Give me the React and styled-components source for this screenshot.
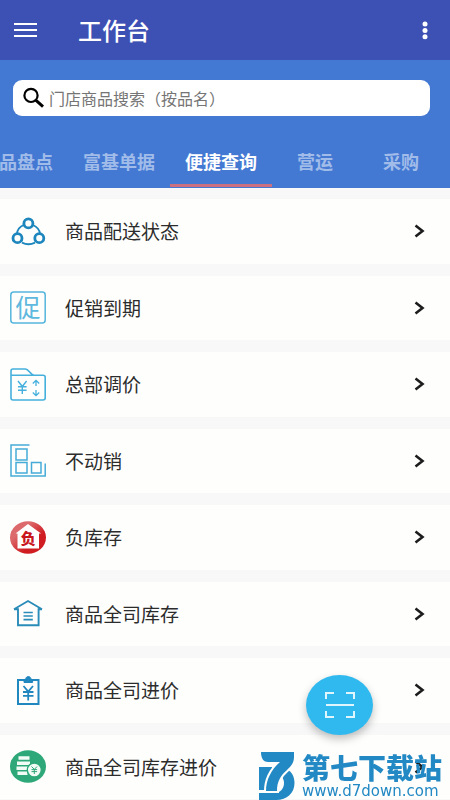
import React, { useLayoutEffect, useRef, useState } from 'react'
import styled, { createGlobalStyle } from 'styled-components'


const tabs = ['商品盘点', '富基单据', '便捷查询', '营运', '采购']

const menu = [
    { title: '商品配送状态', icon: <DeliveryIcon /> },
    { title: '促销到期', icon: <PromotionIcon /> },
    { title: '总部调价', icon: <FolderPriceIcon /> },
    { title: '不动销', icon: <UnsoldIcon /> },
    { title: '负库存', icon: <NegativeStockIcon /> },
    { title: '商品全司库存', icon: <WarehouseIcon /> },
    { title: '商品全司进价', icon: <ClipboardIcon /> },
    { title: '商品全司库存进价', icon: <CoinsIcon /> },
]

export default function App() {
    const [active, setActive] = useState('便捷查询')
    const tabBar = useRef(null)

    useLayoutEffect(() => {
        tabBar.current.scrollLeft = 34
    }, [])

    return (
        <>
            <GlobalStyle />
            <Page>
                <Header>
                    <IconButton aria-label="菜单">
                        <svg width="24" height="16" viewBox="0 0 24 16" stroke="currentColor" strokeWidth="2">
                            <path d="M0 2H23M0 8H23M0 14H23" />
                        </svg>
                    </IconButton>
                    <h1>工作台</h1>
                    <IconButton aria-label="更多">
                        <svg width="6" height="20" viewBox="0 0 6 20" fill="currentColor">
                            <circle cx="3" cy="4" r="2.5" />
                            <circle cx="3" cy="10.4" r="2.5" />
                            <circle cx="3" cy="16.8" r="2.5" />
                        </svg>
                    </IconButton>
                </Header>

                <TopPanel>
                    <SearchBox>
                        <svg width="23" height="22" viewBox="0 0 23 22" fill="none" stroke="#000">
                            <circle cx="9" cy="8.4" r="6.6" strokeWidth="2.2" />
                            <path d="M13.5 12.8L21 19.6" strokeWidth="3" />
                        </svg>
                        <input type="search" aria-label="门店商品搜索" placeholder="门店商品搜索（按品名）" />
                    </SearchBox>
                    <Tabs role="tablist" ref={tabBar}>
                        {
                            tabs.map(tab => (
                                <Tab
                                    key={tab}
                                    role="tab"
                                    aria-selected={tab === active}
                                    $active={tab === active}
                                    onClick={() => setActive(tab)}
                                >
                                    {tab}
                                </Tab>
                            ))
                        }
                    </Tabs>
                </TopPanel>

                <MenuList>
                    {
                        menu.map(item => (
                            <MenuItem key={item.title}>
                                <MenuLink href="#">
                                    {item.icon}
                                    <span>{item.title}</span>
                                    <Chevron />
                                </MenuLink>
                            </MenuItem>
                        ))
                    }
                </MenuList>
            </Page>

            <ScanButton aria-label="扫一扫">
                <svg width="30" height="28" viewBox="0 0 30 28" fill="none" stroke="#dff6ff" strokeWidth="2">
                    <path d="M1 8V2H9M21 2H29V8M29 20V26H21M9 26H1V20M1 14H29" />
                </svg>
            </ScanButton>

            <SiteMark href="#">
                <svg width="36" height="48" viewBox="0 0 36 48" fill="#2389c4">
                    <path d="M0 15H13V25L9 38H0Z" />
                    <path d="M29 18C33 20 35.5 25 35.5 31C35.5 41 28 48 17 48H0V41H15C21 41 25 37 25 31C25 28 24 26 22 24Z" />
                    <path d="M2 0H35V5C35 11 32 14 28 18C21 24 18 30 18 39H7C7 28 12 18 21 10H9C5 10 2 7 2 0Z" stroke="#fefefd" strokeWidth="4" paintOrder="stroke" />
                </svg>
                <SiteText>
                    <strong>第七下载站</strong>
                    <small>www.d7down.com</small>
                </SiteText>
            </SiteMark>
        </>
    )
}


function Chevron() {
    return (
        <svg width="12" height="14" viewBox="0 0 12 14" fill="none" stroke="#1c1c1c" strokeWidth="2.6">
            <path d="M1.5 1.5L8.5 7L1.5 12.5" />
        </svg>
    )
}

function DeliveryIcon() {
    return (
        <MenuIcon viewBox="0 0 36 33" stroke="#1c86bd">
            <path d="M13.5 10C9.5 11.8 7.4 14.8 7 18.5M23 10C27 11.8 29.4 14.8 30 18.5M12 27.6C16 29.6 21 29.6 25 27.6" strokeWidth="1.8" />
            <circle cx="18.4" cy="8.4" r="4.5" strokeWidth="2.8" />
            <circle cx="7.5" cy="23.2" r="4.5" strokeWidth="2.8" />
            <circle cx="29.3" cy="23.2" r="4.5" strokeWidth="2.8" />
        </MenuIcon>
    )
}

function PromotionIcon() {
    return (
        <MenuIcon viewBox="0 0 36 33" stroke="#55b5dd">
            <rect x="0.8" y="1" width="34.4" height="31" rx="3" strokeWidth="1.5" />
            <text x="18" y="26" textAnchor="middle" fontSize="25" fontWeight="400" fill="#5fb9de" stroke="none">促</text>
        </MenuIcon>
    )
}

function FolderPriceIcon() {
    return (
        <MenuIcon viewBox="0 0 36 33" stroke="#45b0dc">
            <path d="M1 7.5V3C1 1.5 1.8 1 3 1H15.5C19 1 20 7.2 24.5 7.2H33C34.5 7.2 35.2 8 35.2 9.2V30C35.2 31.4 34.4 32 33 32H3C1.6 32 1 31.4 1 30V7.2H25" strokeWidth="1.6" />
            <path d="M8 13L12.3 18.5L16.6 13M12.3 18.5V26M8 18.8H16.6M8 22.2H16.6" strokeWidth="1.4" />
            <path d="M26 18V12.5M22.8 15.5L26 12.3L29.2 15.5M26 22V27.5M22.8 24.5L26 27.7L29.2 24.5" strokeWidth="1.3" />
        </MenuIcon>
    )
}

function UnsoldIcon() {
    return (
        <MenuIcon viewBox="0 0 36 33" stroke="#45acd8" strokeWidth="1.5">
            <path d="M19.5 1H1V32H35.2V19.5" />
            <rect x="6" y="5" width="11" height="11" />
            <rect x="6" y="18.5" width="11" height="10.5" />
            <rect x="21.5" y="18.5" width="9.5" height="10.5" />
        </MenuIcon>
    )
}

function NegativeStockIcon() {
    return (
        <MenuIcon viewBox="0 0 36 33">
            <defs>
                <linearGradient id="stockRed" x1="0" y1="0" x2="1" y2="1">
                    <stop offset="0.3" stopColor="#dc6a6c" />
                    <stop offset="0.65" stopColor="#cf1d22" />
                </linearGradient>
            </defs>
            <ellipse cx="18" cy="16.5" rx="18" ry="16.2" fill="url(#stockRed)" />
            <path d="M7.5 27.5V12.5H5.5L18 3L31 12.5H29V27.5Z" fill="#fff" />
            <text x="18.2" y="23.2" textAnchor="middle" fontSize="15" fontWeight="900" fill="#c9171e">负</text>
        </MenuIcon>
    )
}

function WarehouseIcon() {
    return (
        <MenuIcon viewBox="0 0 36 33" stroke="#2a8cb8">
            <path d="M4 12.2L18 4L32 12.2M4 12.2H8V28.3H28.6V12.2H32" strokeWidth="1.9" />
            <path d="M13.5 15.5H22.8M13.5 19H22.8M13.5 22.6H22.8" strokeWidth="1.6" />
        </MenuIcon>
    )
}

function ClipboardIcon() {
    return (
        <MenuIcon viewBox="0 0 36 33" stroke="#2087bf">
            <rect x="8" y="6" width="20.5" height="24" strokeWidth="2" />
            <path d="M14 8.5V6C14 5 16 5.4 16 4.4C16 2 20.6 2 20.6 4.4C20.6 5.4 22.6 5 22.6 6V8.5Z" fill="#2087bf" strokeWidth="1" />
            <path d="M13.5 12L18.2 17.5L23 12M18.2 17.5V26.5M13 18H23.5M13 21.8H23.5" strokeWidth="1.8" />
        </MenuIcon>
    )
}

function CoinsIcon() {
    return (
        <MenuIcon viewBox="0 0 36 33">
            <ellipse cx="18" cy="16.5" rx="18" ry="16.2" fill="#2ea878" />
            <path d="M8.5 8H19.5M7 13.3H20M6.5 18.3H18.5M7.5 23.2H17.5" stroke="#f3fbf7" strokeWidth="3.6" />
            <circle cx="24.3" cy="20" r="7" fill="#f3fbf7" stroke="#2ea878" strokeWidth="1.4" />
            <path d="M21.5 16.5L24.3 19.4L27.1 16.5M24.3 19.4V24M21.5 19.6H27.1M21.5 21.6H27.1" stroke="#2ea878" strokeWidth="1" />
        </MenuIcon>
    )
}


const GlobalStyle = createGlobalStyle`

    * {
        box-sizing: border-box;
    }

    body {
        margin: 0;
        background-color: #f8f8f8;
    }

    body, button, input {
        font-family: "Noto Sans CJK SC", "Noto Sans", sans-serif;
    }

`

const Page = styled.main`
    min-height: 100vh;
    display: flex;
    flex-direction: column;
`

const Header = styled.header`
    height: 60px;
    display: flex;
    align-items: center;
    padding: 0 14px;
    background-color: #3d50b3;
    color: #fff;

    h1 {
        flex: 1;
        margin: 0 0 0 40px;
        font-size: 24px;
        line-height: 32px;
        font-weight: 500;
    }
`

const IconButton = styled.button`
    display: flex;
    padding: 0;
    border: 0;
    background: none;
    color: #fff;
    cursor: pointer;

    &:last-child {
        padding: 0 8px;
    }
`

const TopPanel = styled.section`
    padding: 20px 0 1px;
    background-color: #4379d3;
`

const SearchBox = styled.label`
    height: 36px;
    display: flex;
    align-items: center;
    margin: 0 20px 0 13px;
    padding: 0 10px 0 9px;
    gap: 4px;
    border-radius: 9px;
    background-color: #fff;

    input {
        flex: 1;
        min-width: 0;
        padding: 0;
        border: 0;
        outline: 0;
        background: none;
        font-size: 16px;
        line-height: 24px;
    }

    input::placeholder {
        color: #757575;
    }
`

const Tabs = styled.div`
    display: flex;
    margin-top: 22px;
    padding-right: 16px;
    overflow-x: auto;
    scrollbar-width: none;
`

const Tab = styled.button`
    flex: none;
    min-width: 86px;
    height: 49px;
    padding: 0 15px;
    border: 0;
    border-bottom: 3px solid ${({ $active }) => $active ? '#cb7080' : 'transparent'};
    background: none;
    color: ${({ $active }) => $active ? '#fff' : '#a1bce9'};
    font-size: 18px;
    font-weight: 700;
    cursor: pointer;
`

const MenuList = styled.ul`
    flex: 1;
    display: grid;
    grid-auto-rows: minmax(64px, 1fr);
    gap: 12px;
    margin: 0;
    padding: 11px 0 1px;
    list-style: none;
`

const MenuItem = styled.li`
    display: flex;
    background-color: #fefefd;
`

const MenuLink = styled.a`
    flex: 1;
    display: flex;
    align-items: center;
    padding: 0 24px 0 10px;
    color: #2c2c2c;
    text-decoration: none;

    span {
        flex: 1;
        margin-left: 19px;
        font-size: 19px;
        line-height: 28px;
    }
`

const MenuIcon = styled.svg`
    flex: none;
    width: 36px;
    height: 33px;
    fill: none;
    overflow: visible;
`

const ScanButton = styled.button`
    position: fixed;
    right: 77px;
    bottom: 65px;
    width: 67px;
    height: 60px;
    display: flex;
    align-items: center;
    justify-content: center;
    padding: 0;
    border: 0;
    border-radius: 50%;
    background-color: #2fb9ee;
    box-shadow: 0 4px 8px rgba(0, 0, 0, 0.25);
    cursor: pointer;
`

const SiteMark = styled.a`
    position: fixed;
    right: 8px;
    bottom: 0;
    display: flex;
    gap: 7px;
    color: #2389c4;
    text-decoration: none;
`

const SiteText = styled.span`
    display: flex;
    flex-direction: column;
    justify-content: flex-end;

    strong {
        font-size: 28px;
        line-height: 30px;
        font-weight: 900;
    }

    small {
        font-family: "DejaVu Sans", sans-serif;
        font-size: 15px;
        line-height: 18px;
    }
`
